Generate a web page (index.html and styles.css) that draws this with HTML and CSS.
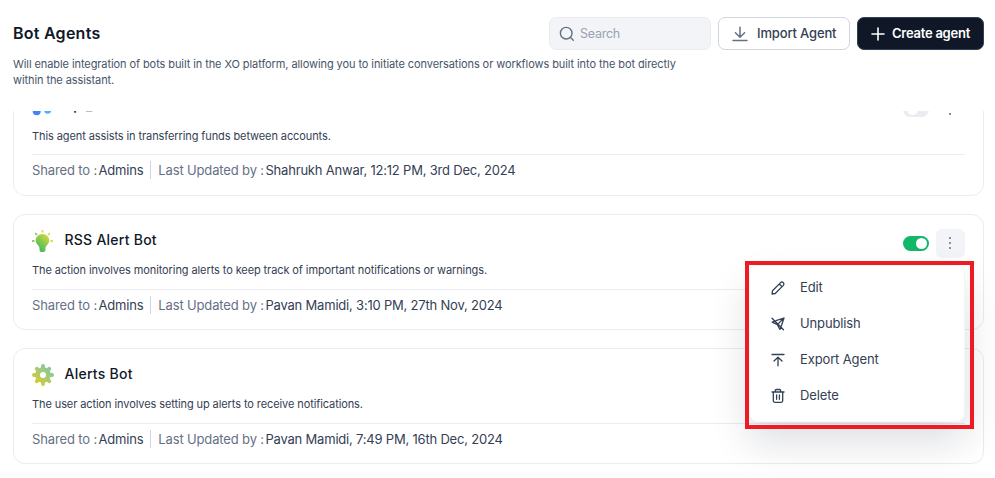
FILE: index.html
```html
<!DOCTYPE html>
<html lang="en">
<head>
<meta charset="utf-8">
<title>Bot Agents</title>
<link rel="stylesheet" href="styles.css">
</head>
<body>
<div class="page">
  <header class="header">
    <div class="header-row">
      <h1 class="title">Bot Agents</h1>
      <div class="actions">
        <div class="search">
          <svg width="16" height="16" viewBox="0 0 16 16" fill="none" stroke="#667085" stroke-width="1.4" stroke-linecap="round"><circle cx="7.2" cy="7.2" r="5.8"/><path d="M11.5 11.5L14.3 14.3"/></svg>
          <span>Search</span>
        </div>
        <button class="btn btn-light">
          <svg width="16" height="16" viewBox="0 0 16 16" fill="none" stroke="#667085" stroke-width="1.5" stroke-linecap="round" stroke-linejoin="round"><path d="M8 1.2V11M3.4 6.8L8 11.3L12.6 6.8M1 14.500H15"/></svg>
          <span>Import Agent</span>
        </button>
        <button class="btn btn-dark">
          <svg width="14" height="14" viewBox="0 0 14 14" fill="none" stroke="#fff" stroke-width="1.6" stroke-linecap="round"><path d="M7 1V13M1 7H13"/></svg>
          <span>Create agent</span>
        </button>
      </div>
    </div>
    <p class="subtitle">Will enable integration of bots built in the XO platform, allowing you to initiate conversations or workflows built into the bot directly within the assistant.</p>
  </header>
  <main class="list">
    <article class="card">
      <div class="card-head">
        <svg class="icon" width="22" height="22" viewBox="0 0 22 22"><circle cx="4.700" cy="15.300" r="4" fill="#4285f4"/><circle cx="15.700" cy="14.200" r="3.500" fill="#4db1ff"/></svg>
        <h2 class="name">Epi_</h2>
        <span class="toggle"></span>
        <span class="more"><i></i><i></i><i></i></span>
      </div>
      <p class="desc">This agent assists in transferring funds between accounts.</p>
      <div class="meta"><span class="key">Shared to :</span><span>Admins</span><i class="bar"></i><span class="key">Last Updated by :</span><span>Shahrukh Anwar, 12:12 PM, 3rd Dec, 2024</span></div>
    </article>
    <article class="card">
      <div class="card-head">
        <svg class="icon" width="22" height="22" viewBox="0 0 22 22">
          <defs><linearGradient id="bulb" x1="1" y1="0" x2="0.3" y2="1"><stop offset="0" stop-color="#e6da3c"/><stop offset=".5" stop-color="#8fcb4b"/><stop offset="1" stop-color="#3cb765"/></linearGradient></defs>
          <path fill="url(#bulb)" d="M10.5 4C6.500 4 3.700 7 3.700 10.600C3.700 14 7.500 16 7.500 18V20Q7.500 22 9.500 22H11.500Q13.500 22 13.500 20V18C13.500 16 17.300 14 17.300 10.600C17.300 7 14.500 4 10.500 4Z"/>
          <g stroke-width="1.800"><path stroke="#dfdc46" d="M10.500 0V2.500M16 5L17.800 3.200M18.500 11H21"/><path stroke="#8fcf58" d="M5 5L3.200 3.200M2.500 11H0"/></g>
        </svg>
        <h2 class="name">RSS Alert Bot</h2>
        <span class="toggle on"></span>
        <span class="more active"><i></i><i></i><i></i></span>
      </div>
      <p class="desc">The action involves monitoring alerts to keep track of important notifications or warnings.</p>
      <div class="meta"><span class="key">Shared to :</span><span>Admins</span><i class="bar"></i><span class="key">Last Updated by :</span><span>Pavan Mamidi, 3:10 PM, 27th Nov, 2024</span></div>
      <div class="menu">
        <div class="item"><svg width="16" height="16" viewBox="0 0 16 16"><path d="M2 14L2.500 10.800L10.600 2.600Q12 1.300 13.300 2.600T13.400 5.400L5.200 13.500L2 14ZM9.300 4L12 6.700"/></svg><span>Edit</span></div>
        <div class="item"><svg width="16" height="16" viewBox="0 0 16 16"><path d="M2 2.300L13.500 13.800M6 4.700L14 2L11.300 10M9.900 13.500L7.400 8.600L2.200 6.200L4.300 5.400M7.400 8.600L13.600 2.300M9.900 13.500L10.700 11.300"/></svg><span>Unpublish</span></div>
        <div class="item"><svg width="16" height="16" viewBox="0 0 16 16"><path d="M2 2.500H14M8 13.800V5.500M4 9L8 5.200L12 9"/></svg><span>Export Agent</span></div>
        <div class="item"><svg width="16" height="16" viewBox="0 0 16 16"><path d="M2 4H14M3.300 4V12.800Q3.300 14.300 4.800 14.300H11.200Q12.700 14.300 12.700 12.800V4M5.300 4V2.700Q5.300 1.500 6.500 1.500H9.500Q10.700 1.500 10.700 2.700V4M6.600 7V11.300M9.400 7V11.300"/></svg><span>Delete</span></div>
      </div>
      <div class="highlight"></div>
    </article>
    <article class="card">
      <div class="card-head">
        <svg class="icon" width="22" height="22" viewBox="0 0 22 22">
          <defs><linearGradient id="gear" x1="1" y1="0" x2="0.200" y2="1"><stop offset="0" stop-color="#70c7b8"/><stop offset=".5" stop-color="#a6ca75"/><stop offset="1" stop-color="#e0cc25"/></linearGradient><mask id="hole"><rect width="22" height="22" fill="#fff"/><circle cx="11" cy="11" r="3" fill="#000"/></mask></defs>
          <g mask="url(#hole)" fill="url(#gear)"><path d="M9 3.400V2A2 2 0 0 1 13 2V3.400L15 4.300L16 3.300A2 2 0 0 1 18.800 6.100L17.800 7.100L18.600 9H20A2 2 0 0 1 20 13H18.600L17.800 15L18.800 16A2 2 0 0 1 16 18.800L15 17.800L13 18.600V20A2 2 0 0 1 9 20V18.600L7 17.800L6 18.800A2 2 0 0 1 3.200 16L4.200 15L3.400 13H2A2 2 0 0 1 2 9H3.400L4.200 7.100L3.200 6.100A2 2 0 0 1 6 3.300L7 4.300Z"/></g>
        </svg>
        <h2 class="name">Alerts Bot</h2>
      </div>
      <p class="desc">The user action involves setting up alerts to receive notifications.</p>
      <div class="meta"><span class="key">Shared to :</span><span>Admins</span><i class="bar"></i><span class="key">Last Updated by :</span><span>Pavan Mamidi, 7:49 PM, 16th Dec, 2024</span></div>
    </article>
  </main>
</div>
</body>
</html>
```
FILE: styles.css
```css
* { box-sizing: border-box; }
body { margin: 0; background: #fff; font-family: Inter, "Liberation Sans", sans-serif; color: #344054; }
h1, h2, p { margin: 0; }
svg { flex: none; }
.page { height: 478px; overflow: hidden; padding: 0 11px 0 13px; display: flex; flex-direction: column; }
.header { height: 111px; flex: none; padding-top: 17px; }
.header-row { display: flex; align-items: center; justify-content: space-between; height: 33px; }
.title { font-size: 16px; font-weight: 600; color: #101828; line-height: 24px; letter-spacing: .25px; padding-bottom: 2px; }
.actions { display: flex; gap: 7px; }
.search { width: 162px; height: 33px; border: 1px solid #eaecf0; border-radius: 7px; background: #f2f4f7; display: flex; align-items: center; gap: 6px; padding-left: 9px; font-size: 12.5px; letter-spacing: -.25px; color: #98a2b3; }
.search span { margin-left: -1px; }
.btn { height: 33px; border-radius: 7px; display: flex; align-items: center; font: 500 13px Inter, sans-serif; padding: 0 0 2px; white-space: nowrap; }
.btn svg { position: relative; top: 1px; }
.btn-light { width: 132px; padding-left: 13px; gap: 9px; background: #fff; border: 1px solid #d0d5dd; color: #344054; letter-spacing: -.15px; }
.btn-dark { width: 127px; padding-left: 13px; gap: 7px; background: #101828; border: 1px solid #344054; color: #fff; font-weight: 600; letter-spacing: -.25px; }
.subtitle { width: 680px; margin-top: 6px; font-size: 11px; line-height: 16px; letter-spacing: -.085px; color: #475467; }
.list { flex: 1; min-height: 0; overflow: hidden; display: flex; flex-direction: column; gap: 18px; margin-right: -11px; padding-right: 11px; }
.card { position: relative; flex: none; height: 116px; border: 1px solid #eaecf0; border-radius: 12px; padding: 14px 18px 0; }
.card:first-child { margin-top: -31px; }
.card:first-child .meta { margin-top: 10px; }
.card:first-child .name { margin-top: -8px; }
.card-head { display: flex; align-items: center; height: 28px; }
.icon { margin-top: -5px; }
.name { margin: -6px auto 0 10.5px; font-size: 14px; line-height: 20px; font-weight: 500; color: #101828; letter-spacing: .25px; }
.toggle { width: 26px; height: 15px; border-radius: 8px; background: #eaecf0; display: flex; padding: 2px 2px 2px 4px; margin-right: 7px; }
.toggle::after { content: ""; width: 11px; height: 11px; border-radius: 50%; background: #fff; }
.toggle.on { background: #12b76a; justify-content: flex-end; }
.more { width: 29px; height: 29px; border-radius: 6px; display: flex; flex-direction: column; align-items: center; justify-content: center; gap: 2.5px; padding-right: 1px; }
.more i { width: 2.5px; height: 2.5px; background: #667085; border-radius: 50%; }
.more.active { background: #f2f4f7; }
.desc { margin-top: 5px; font-size: 11px; line-height: 16px; letter-spacing: -.095px; color: #344054; }
.meta { display: flex; align-items: center; margin-top: 11px; border-top: 1px solid #eaecf0; padding-top: 6px; font-size: 13px; line-height: 18px; letter-spacing: -.2px; }
.key { color: #667085; margin-right: 1.5px; letter-spacing: -.14px; }
.bar { width: 1px; height: 18px; background: #d0d5dd; margin: 0 7px; }
.menu { position: absolute; z-index: 2; left: 735px; top: 50px; width: 216px; height: 157px; background: #fff; border: 1px solid #f2f4f7; border-radius: 8px; padding: 3px 20px; box-shadow: 0 20px 40px rgba(16, 24, 40, .14); }
.item { display: flex; align-items: center; height: 36px; gap: 14px; font-size: 13px; letter-spacing: -.13px; color: #344054; }
.item svg { margin-top: 1px; fill: none; stroke: #344054; stroke-width: 1.3; stroke-linecap: round; stroke-linejoin: round; }
.highlight { position: absolute; z-index: 3; left: 731px; top: 46px; width: 229px; height: 168px; border: 4px solid #ed1c24; }
```
